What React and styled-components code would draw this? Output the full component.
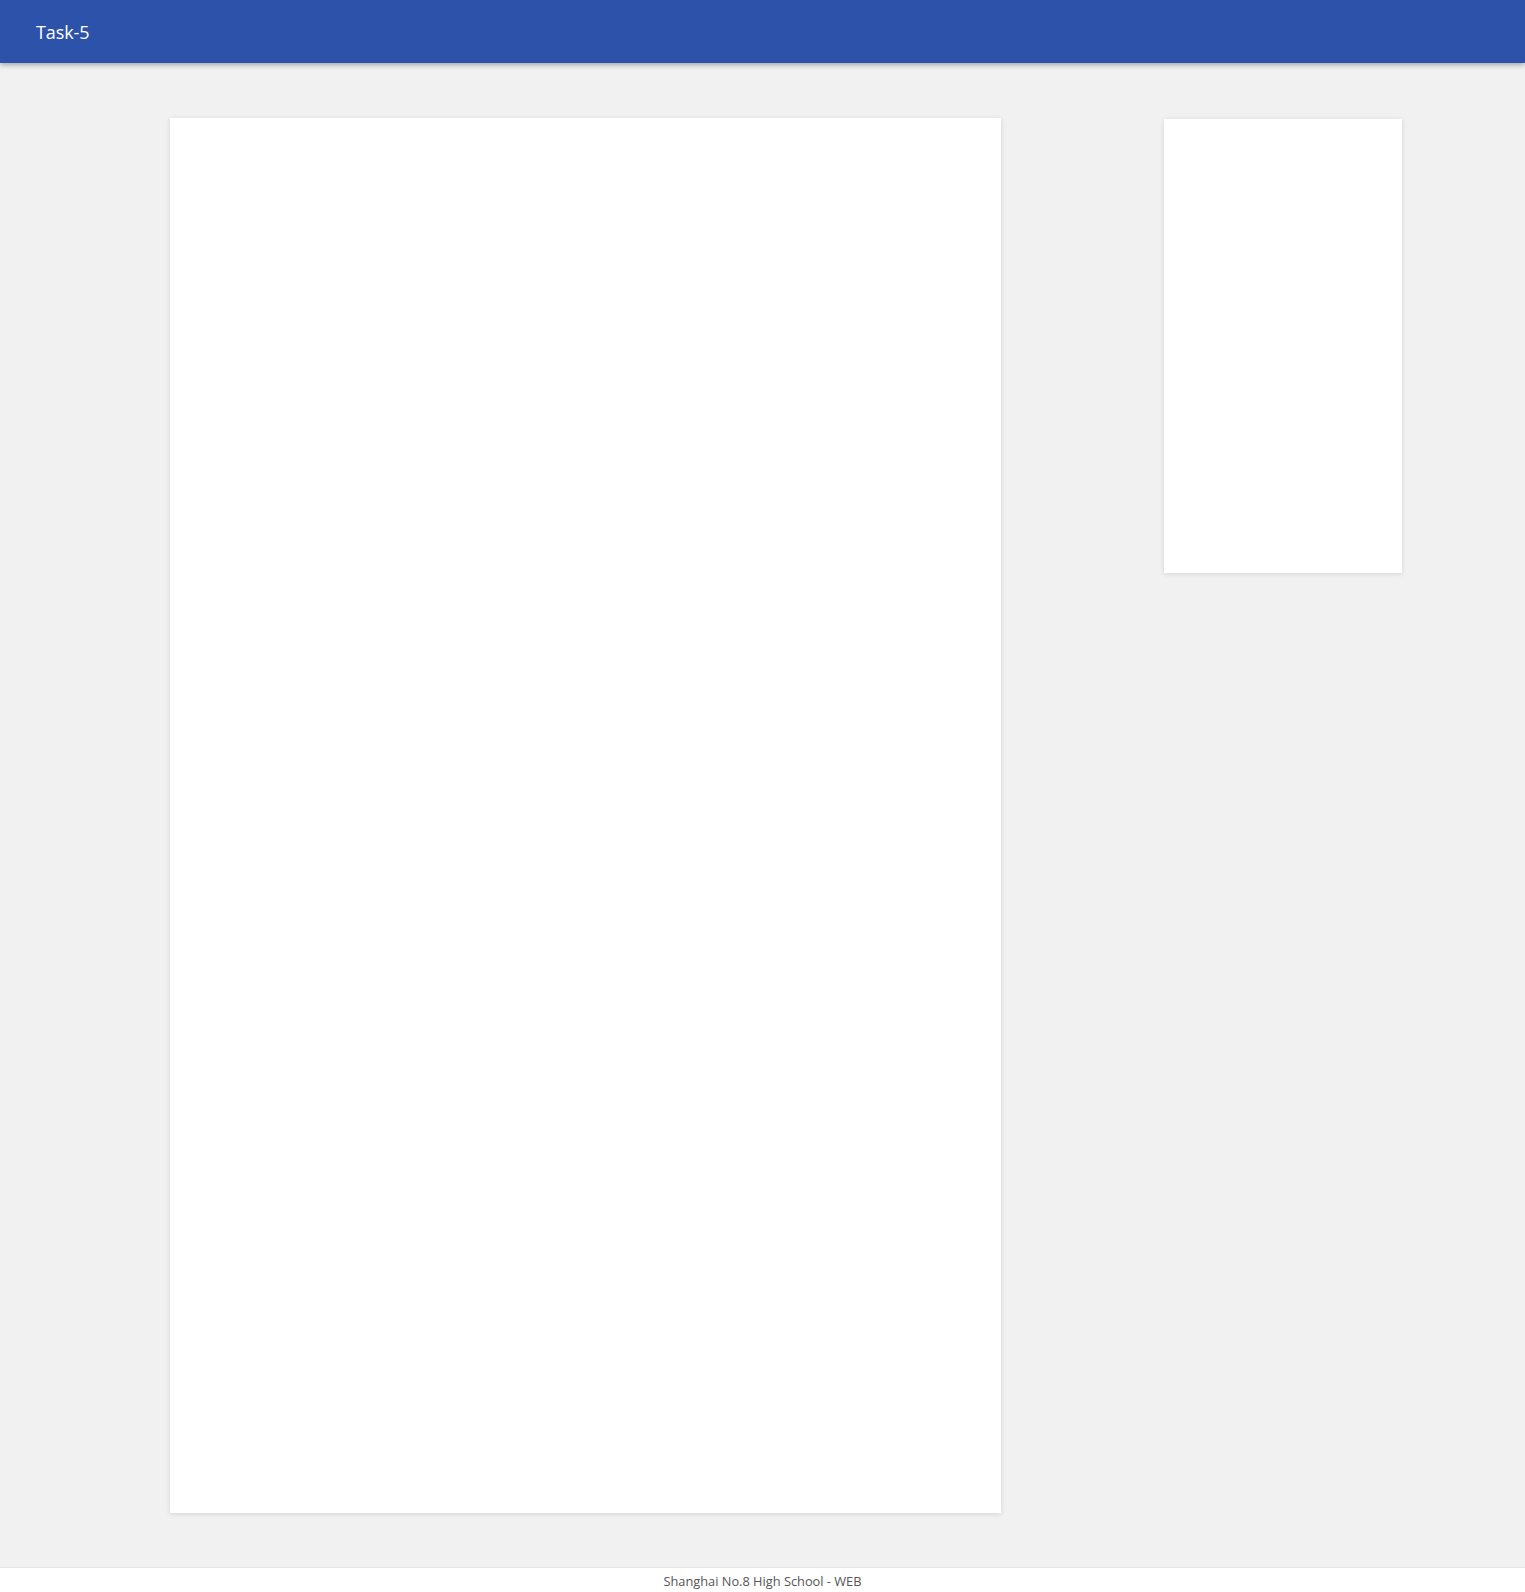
import React from 'react';
import styled, { createGlobalStyle } from 'styled-components';

// Page colours
const brandBlue = '#2d52a9';
const pageGrey = '#f1f1f1';

const GlobalStyle = createGlobalStyle`
  html, body {
    margin: 0;
    padding: 0;
    background: ${pageGrey};
    font-family: 'Open Sans', 'Noto Sans', sans-serif;
  }
`;

const Page = styled.div`
  min-height: 1592px;
  display: flex;
  flex-direction: column;
`;

const Header = styled.header`
  height: 63px;
  background: ${brandBlue};
  box-shadow: 0 2px 5px rgba(0, 0, 0, 0.3);
  display: flex;
  align-items: center;
  padding-left: 36px;
  position: relative;
  z-index: 1;
`;

const Title = styled.h1`
  margin: 0;
  color: #ffffff;
  font-size: 18px;
  font-weight: 500;
  letter-spacing: -0.1px;
`;

const Main = styled.main`
  flex: 1;
  display: flex;
  align-items: flex-start;
  padding: 55px 0 54px 170px;
`;

const Card = styled.section`
  background: #ffffff;
  box-shadow: 0 1px 5px rgba(0, 0, 0, 0.12);
  width: ${(p) => p.$width}px;
  height: ${(p) => p.$height}px;
  margin-top: ${(p) => p.$offset || 0}px;
`;

const Side = styled.aside`
  margin-left: 163px;
`;

const Footer = styled.footer`
  height: 25px;
  background: #ffffff;
  border-top: 1px solid #e6e6e6;
  display: flex;
  align-items: center;
  justify-content: center;
  font-size: 12.8px;
  color: #555555;
`;

export default function App() {
  return (
    <Page>
      <GlobalStyle />
      <Header>
        <Title>Task-5</Title>
      </Header>
      <Main>
        <Card $width={831} $height={1395} />
        <Side>
          <Card $width={238} $height={454} $offset={1} />
        </Side>
      </Main>
      <Footer>Shanghai No.8 High School - WEB</Footer>
    </Page>
  );
}
